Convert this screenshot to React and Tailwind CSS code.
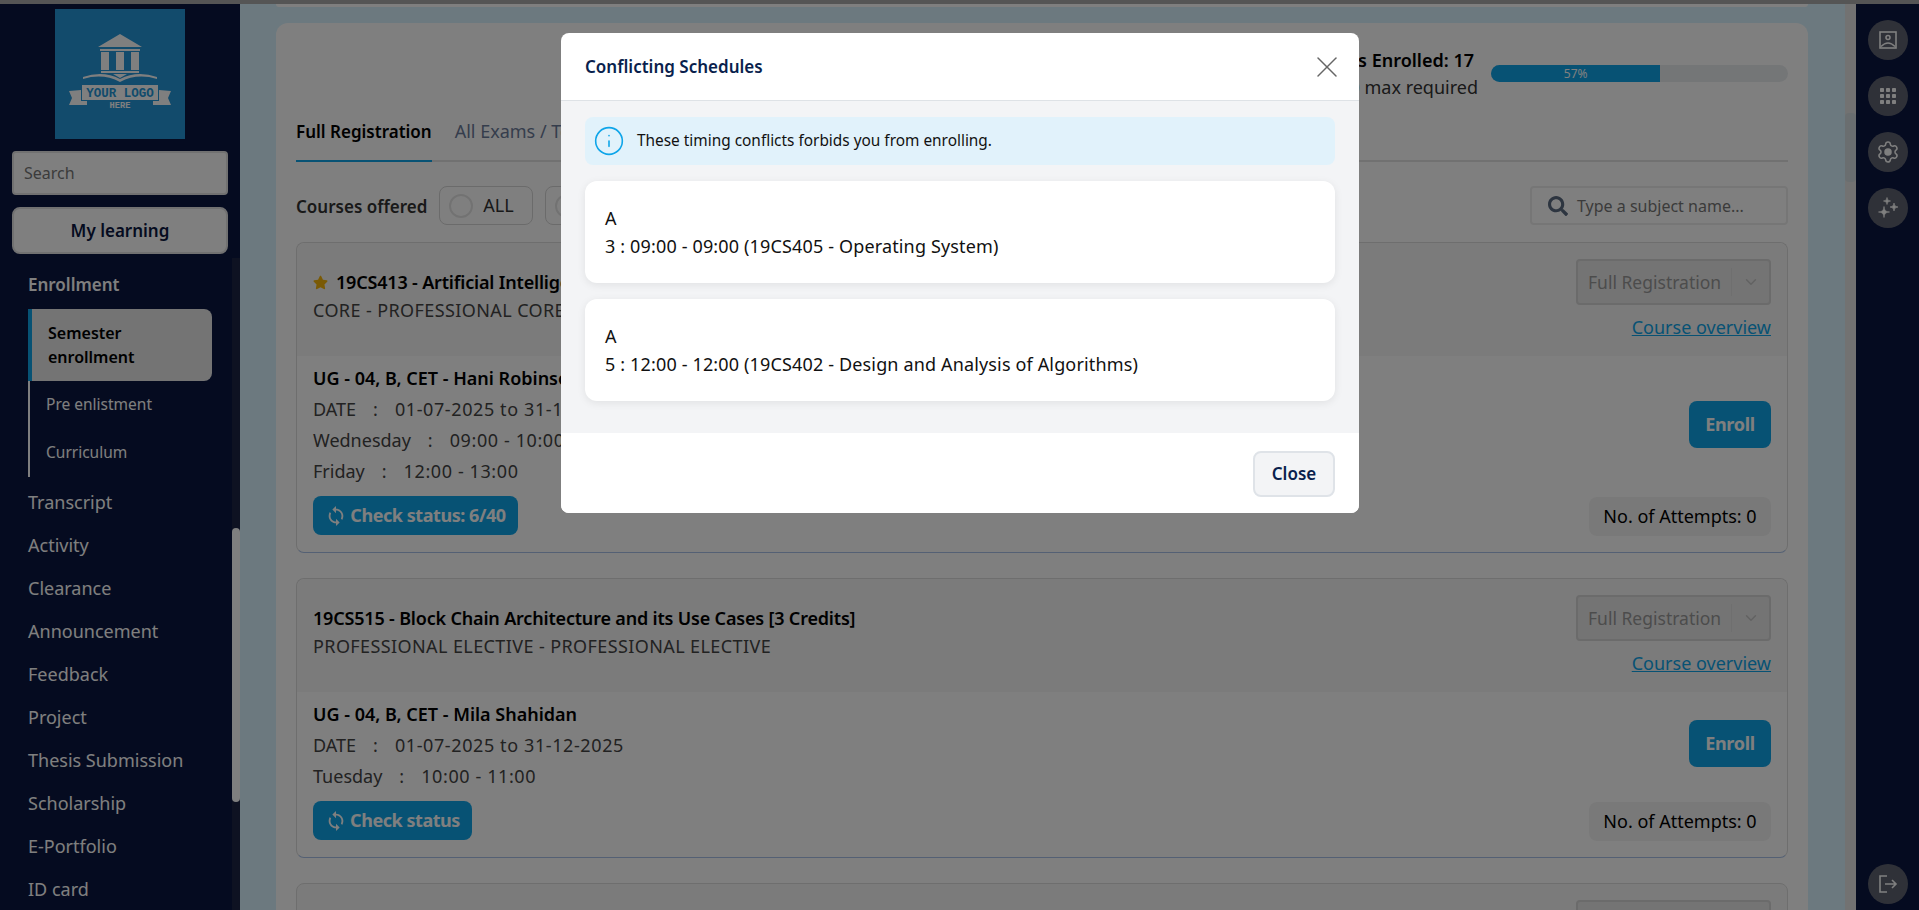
import { X, Info, ChevronDown, Settings } from 'lucide-react';
import { FaStar, FaSearch } from 'react-icons/fa';
import { MdSync } from 'react-icons/md';

const menuTop = ['Transcript', 'Activity', 'Clearance', 'Announcement', 'Feedback', 'Project', 'Thesis Submission', 'Scholarship', 'E-Portfolio', 'ID card'];

function Logo() {
  return (
    <div className="mx-auto mt-[5px] flex h-[130px] w-[130px] items-center justify-center bg-[#2496d8]">
      <svg viewBox="0 0 130 100" className="h-[100px] w-[130px]" fill="#fff">
        <path d="M43 23 L65 10 L87 23 Z" />
        <rect x="45" y="25" width="40" height="2" />
        <rect x="46" y="28" width="8" height="18" />
        <rect x="61" y="28" width="8" height="18" />
        <rect x="76" y="28" width="8" height="18" />
        <rect x="46" y="47" width="38" height="2" />
        <path d="M28 53 Q48 46 65 55 Q82 46 102 53 L102 55 Q82 49 65 58 Q48 49 28 55 Z" />
        <path d="M58 50 L72 50 L65 54 Z" />
        <rect x="27" y="61" width="76" height="15" />
        <path d="M14 67 L26 66 L26 77 L32 77 L32 81 L14 81 L17 74 Z M116 67 L104 66 L104 77 L98 77 L98 81 L116 81 L113 74 Z" />
        <text x="65" y="73" textAnchor="middle" fontSize="12.5" fontWeight="700" fontFamily="'Liberation Mono', monospace" fill="#2496d8">YOUR LOGO</text>
        <text x="65" y="84" textAnchor="middle" fontSize="8.7" fontWeight="700" fontFamily="'Liberation Mono', monospace" fill="#fff">HERE</text>
      </svg>
    </div>
  );
}

function Sidebar() {
  return (
    <aside className="relative h-full w-[240px] shrink-0 overflow-hidden bg-[#0a1640] text-white">
      <Logo />
      <div className="mt-3 px-3">
        <div className="flex h-[44px] items-center rounded border-2 border-[#e3e3e3] bg-white px-[10px] text-[16px] text-[#777]">Search</div>
        <div className="mt-3 flex h-[47px] items-center justify-center rounded-lg border-2 border-[#e3e3e3] bg-white text-[17px] font-semibold text-[#0a1640]">My learning</div>
      </div>
      <div className="pl-7 pt-[19px]">
        <div className="text-[17px] leading-[24px] font-semibold">Enrollment</div>
        <div className="mt-[12px] w-[184px]">
          <div className="rounded-r-lg border-l-4 border-[#0ea5e9] bg-[#e9e9e9] py-[12px] pl-4 pr-4 text-[16px] leading-[24px] font-semibold text-black">Semester enrollment</div>
          <div className="border-l-2 border-white pl-4 text-[15.5px]">
            <div className="flex h-[48px] items-center">Pre enlistment</div>
            <div className="flex h-[48px] items-center">Curriculum</div>
          </div>
        </div>
        <div className="mt-[4px] flex flex-col">
          {menuTop.map((m) => (
            <div key={m} className="flex h-[43px] items-center text-[18px]">{m}</div>
          ))}
        </div>
      </div>
      <div className="absolute bottom-0 right-0 top-[254px] w-[8px] bg-[#1c2545]">
        <div className="mt-[270px] h-[274px] rounded bg-white" />
      </div>
    </aside>
  );
}

function ScheduleRow({ label, value, gap }) {
  return (
    <div className="flex h-[31px] items-center text-[18px] text-[#444]">
      <span>{label}</span>
      <span className={gap}>:</span>
      <span className="tracking-[0.6px]">{value}</span>
    </div>
  );
}

function CheckStatus({ text, width }) {
  return (
    <div className={`flex h-[39px] items-center justify-center gap-[3px] rounded-lg bg-[#0ea5e9] text-[18px] font-bold tracking-[-0.45px] text-white ${width}`}>
      <MdSync size={22} />
      {text}
    </div>
  );
}

function CourseCard({ star, title, sub, section, rows, status, statusWidth, enrollTop, bodyH }) {
  return (
    <section className="mb-[25px] rounded-lg border border-[#dcdcdc] border-b-[#a9c1e8] bg-white">
      <div className="flex h-[113px] justify-between rounded-t-lg bg-[#f6f6f6] pl-4 pr-4">
        <div className="pt-[25px]">
          <div className="flex h-[28px] items-center text-[18px] font-semibold tracking-[-0.18px] text-black">
            {star && <FaStar className="mr-[8px] text-[#f5b50a]" size={15} />}
            {title}
          </div>
          <div className="text-[18px] leading-[29px] tracking-[0.4px] text-[#444]">{sub}</div>
        </div>
        <div className="flex flex-col items-end pt-4">
          <div className="flex h-[46px] w-[195px] items-center rounded border-2 border-[#d6d6d6] bg-[#e9e9e9] pl-[10px] text-[17.5px] text-[#999]">
            <span className="flex-1">Full Registration</span>
            <span className="flex h-[28px] w-[38px] items-center justify-center border-l border-[#dedede]">
              <ChevronDown size={18} className="text-[#c4c4c4]" />
            </span>
          </div>
          <a className="mt-[11px] text-[18px] leading-[22px] text-[#0ea5e9] underline">Course overview</a>
        </div>
      </div>
      <div className={`flex justify-between pl-4 pr-4 pt-[8px] ${bodyH}`}>
        <div>
          <div className="flex h-[28px] items-center text-[18px] font-semibold text-black">{section}</div>
          <div className="mt-[2px]">
            {rows.map((r) => (
              <ScheduleRow key={r.label} {...r} />
            ))}
          </div>
          <div className="mt-[9px]">
            <CheckStatus text={status} width={statusWidth} />
          </div>
        </div>
        <div className="flex flex-col items-end justify-between pb-[16px]">
          <div className={`flex h-[47px] w-[82px] items-center justify-center rounded-lg bg-[#0ea5e9] text-[18px] font-bold tracking-[-0.3px] text-white ${enrollTop}`}>Enroll</div>
          <div className="flex h-[39px] w-[182px] items-center justify-center rounded-lg bg-[#f3f3f3] text-[18px] text-black">No. of Attempts: 0</div>
        </div>
      </div>
    </section>
  );
}

function FilterChip({ label, width }) {
  return (
    <div className={`flex h-[39px] items-center rounded-lg border border-[#d6d6d6] pl-[9px] text-[18px] text-[#333] ${width}`}>
      <span className="h-6 w-6 shrink-0 rounded-full border-2 border-[#e5e5e5]" />
      <span className="ml-[10px]">{label}</span>
    </div>
  );
}

function MainContent() {
  return (
    <main className="relative h-full min-w-0 flex-1 overflow-hidden bg-[#d8f3ff]">
      <div className="ml-9 mr-[48px] h-[3px] rounded-b-xl bg-white" />
      <div className="ml-9 mr-[48px] mt-[16px] rounded-t-xl bg-white px-5 pt-[24px]">
        <div className="flex h-[56px] items-start justify-end">
          <div className="text-right text-[18px] leading-[27px]">
            <div className="pr-[4px] font-semibold text-black">Credits Enrolled: 17</div>
            <div className="text-[#333]">Min 12 / 30 max required</div>
          </div>
          <div className="ml-[13px] mt-[18px] flex h-[17px] w-[297px] overflow-hidden rounded-full bg-[#e9ecef] text-[12px] text-white">
            <div className="flex h-full w-[57%] items-center justify-center bg-[#0ea5e9]">57%</div>
          </div>
        </div>
        <div className="mt-[9px] flex h-[50px] items-start border-b-2 border-[#e3e3e3] text-[17px]">
          <div className="h-[50px] border-b-2 border-[#0ea5e9] pt-[7px] font-semibold text-black">Full Registration</div>
          <div className="ml-[23px] pt-[6px] text-[18px] text-[#6b7a99]">All Exams / Tests</div>
        </div>
        <div className="mt-[24px] flex h-[39px] items-center justify-between">
          <div className="flex items-center gap-[12px]">
            <span className="pt-[2px] text-[17px] font-semibold text-[#333]">Courses offered</span>
            <FilterChip label="ALL" width="w-[94px]" />
            <FilterChip width="w-[130px]" />
          </div>
          <div className="flex h-[39px] w-[258px] items-center rounded border-2 border-[#ececec] pl-4 text-[16px] text-[#777]">
            <FaSearch className="mr-[9px] text-[#5a6a80]" size={20} />
            Type a subject name...
          </div>
        </div>
        <div className="mt-[17px]">
          <CourseCard
            star
            title="19CS413 - Artificial Intelligence [3 Credits]"
            sub="CORE - PROFESSIONAL CORE"
            section="UG - 04, B, CET - Hani Robinson"
            rows={[
              { label: 'DATE', value: '01-07-2025 to 31-12-2025', gap: 'mx-[17px]' },
              { label: 'Wednesday', value: '09:00 - 10:00', gap: 'mx-[17px]' },
              { label: 'Friday', value: '12:00 - 13:00', gap: 'mx-[17px]' },
            ]}
            status="Check status: 6/40"
            statusWidth="w-[205px]"
            enrollTop="mt-[37px]"
            bodyH="h-[196px]"
          />
          <CourseCard
            title="19CS515 - Block Chain Architecture and its Use Cases [3 Credits]"
            sub="PROFESSIONAL ELECTIVE - PROFESSIONAL ELECTIVE"
            section="UG - 04, B, CET - Mila Shahidan"
            rows={[
              { label: 'DATE', value: '01-07-2025 to 31-12-2025', gap: 'mx-[17px]' },
              { label: 'Tuesday', value: '10:00 - 11:00', gap: 'mx-[17px]' },
            ]}
            status="Check status"
            statusWidth="w-[159px]"
            enrollTop="mt-[20px]"
            bodyH="h-[165px]"
          />
          <div className="rounded-t-lg border border-[#dcdcdc] bg-[#f6f6f6] pr-4 pt-4">
            <div className="ml-auto h-[46px] w-[195px] rounded border-2 border-[#d6d6d6] bg-[#e9e9e9]" />
          </div>
        </div>
      </div>
      <div className="absolute bottom-0 right-0 top-0 w-[11px] bg-[#e4e4e4]">
        <div className="mt-[109px] h-[69px] rounded bg-[#d4dde0]" />
      </div>
    </main>
  );
}

function RailButton({ children }) {
  return <div className="flex h-10 w-10 items-center justify-center rounded-full bg-[#5f6370] text-white">{children}</div>;
}

function PortraitIcon() {
  return (
    <svg width="18" height="18" viewBox="0 0 18 18" fill="none" stroke="currentColor" strokeWidth="1.6">
      <rect x="1" y="1" width="16" height="16" />
      <circle cx="9" cy="6.5" r="2" />
      <path d="M2 15.5 Q9 8.5 16 15.5" />
    </svg>
  );
}

function GridIcon() {
  const spots = [0, 6, 12];
  return (
    <svg width="16" height="16" viewBox="0 0 16 16" fill="currentColor">
      {spots.map((y) => spots.map((x) => <rect key={`${x}-${y}`} x={x} y={y} width="4" height="4" rx="0.8" />))}
    </svg>
  );
}

function SparkleIcon() {
  return (
    <svg width="24" height="24" viewBox="0 0 24 24" fill="currentColor" stroke="currentColor" strokeWidth="0.7">
      <path d="M8 10.5 Q8 16 13.5 16 Q8 16 8 21.5 Q8 16 2.5 16 Q8 16 8 10.5 Z" />
      <path d="M18 7 Q18 11 22 11 Q18 11 18 15 Q18 11 14 11 Q18 11 18 7 Z" />
      <path d="M11 1.5 Q11 5 14.5 5 Q11 5 11 8.5 Q11 5 7.5 5 Q11 5 11 1.5 Z" />
    </svg>
  );
}

function LogoutIcon() {
  return (
    <svg width="20" height="20" viewBox="0 0 20 20" fill="none" stroke="currentColor" strokeWidth="1.6">
      <path d="M9 2H2v16h7" />
      <path d="M7 10h11M14 6l4 4-4 4" />
    </svg>
  );
}

function RightRail() {
  return (
    <aside className="flex h-full w-[63px] shrink-0 flex-col items-center justify-between bg-[#0a1640] pb-[6px] pt-[16px]">
      <div className="flex flex-col gap-4">
        <RailButton><PortraitIcon /></RailButton>
        <RailButton><GridIcon /></RailButton>
        <RailButton><Settings size={24} strokeWidth={1.5} className="[&_circle]:fill-current" /></RailButton>
        <RailButton><SparkleIcon /></RailButton>
      </div>
      <RailButton><LogoutIcon /></RailButton>
    </aside>
  );
}

function ConflictItem({ line }) {
  return (
    <div className="h-[102px] rounded-xl bg-white px-5 pt-[23px] text-[18px] leading-[28px] tracking-[0.15px] text-[#111] shadow-[0_2px_8px_rgba(0,0,0,0.08)]">
      <div>A</div>
      <div>{line}</div>
    </div>
  );
}

function ConflictModal() {
  return (
    <div className="absolute inset-0 bg-black/50">
      <div className="absolute left-[561px] top-[33px] w-[798px] overflow-hidden rounded-lg bg-white">
        <div className="flex h-[68px] items-center justify-between border-b border-[#dee2e6] pl-6 pr-[14px]">
          <span className="text-[17px] font-semibold text-[#0a1f4d]">Conflicting Schedules</span>
          <X size={36} strokeWidth={1} className="text-[#666]" />
        </div>
        <div className="h-[332px] bg-[#f3f4f6] px-6 pt-4">
          <div className="flex h-[48px] items-center rounded-lg bg-[#e1f2fb] pl-2 text-[15.4px] text-[#111]">
            <Info size={32} strokeWidth={1.2} className="mr-[12px] text-[#0ea5e9]" />
            These timing conflicts forbids you from enrolling.
          </div>
          <div className="mt-4 flex flex-col gap-[16px]">
            <ConflictItem line="3 : 09:00 - 09:00 (19CS405 - Operating System)" />
            <ConflictItem line="5 : 12:00 - 12:00 (19CS402 - Design and Analysis of Algorithms)" />
          </div>
        </div>
        <div className="flex h-[80px] items-center justify-end bg-white pr-6 pt-[1px]">
          <div className="flex h-[46px] w-[82px] items-center justify-center rounded-lg border-2 border-[#dfe3e8] bg-[#f3f4f6] text-[17px] font-semibold text-[#0a1f4d]">Close</div>
        </div>
      </div>
    </div>
  );
}

export default function App() {
  return (
    <div className="relative h-[910px] w-full overflow-hidden font-['Noto_Sans',sans-serif]">
      <div className="h-[4px] bg-[#aaa]" />
      <div className="flex h-[906px]">
        <Sidebar />
        <MainContent />
        <RightRail />
      </div>
      <ConflictModal />
    </div>
  );
}
